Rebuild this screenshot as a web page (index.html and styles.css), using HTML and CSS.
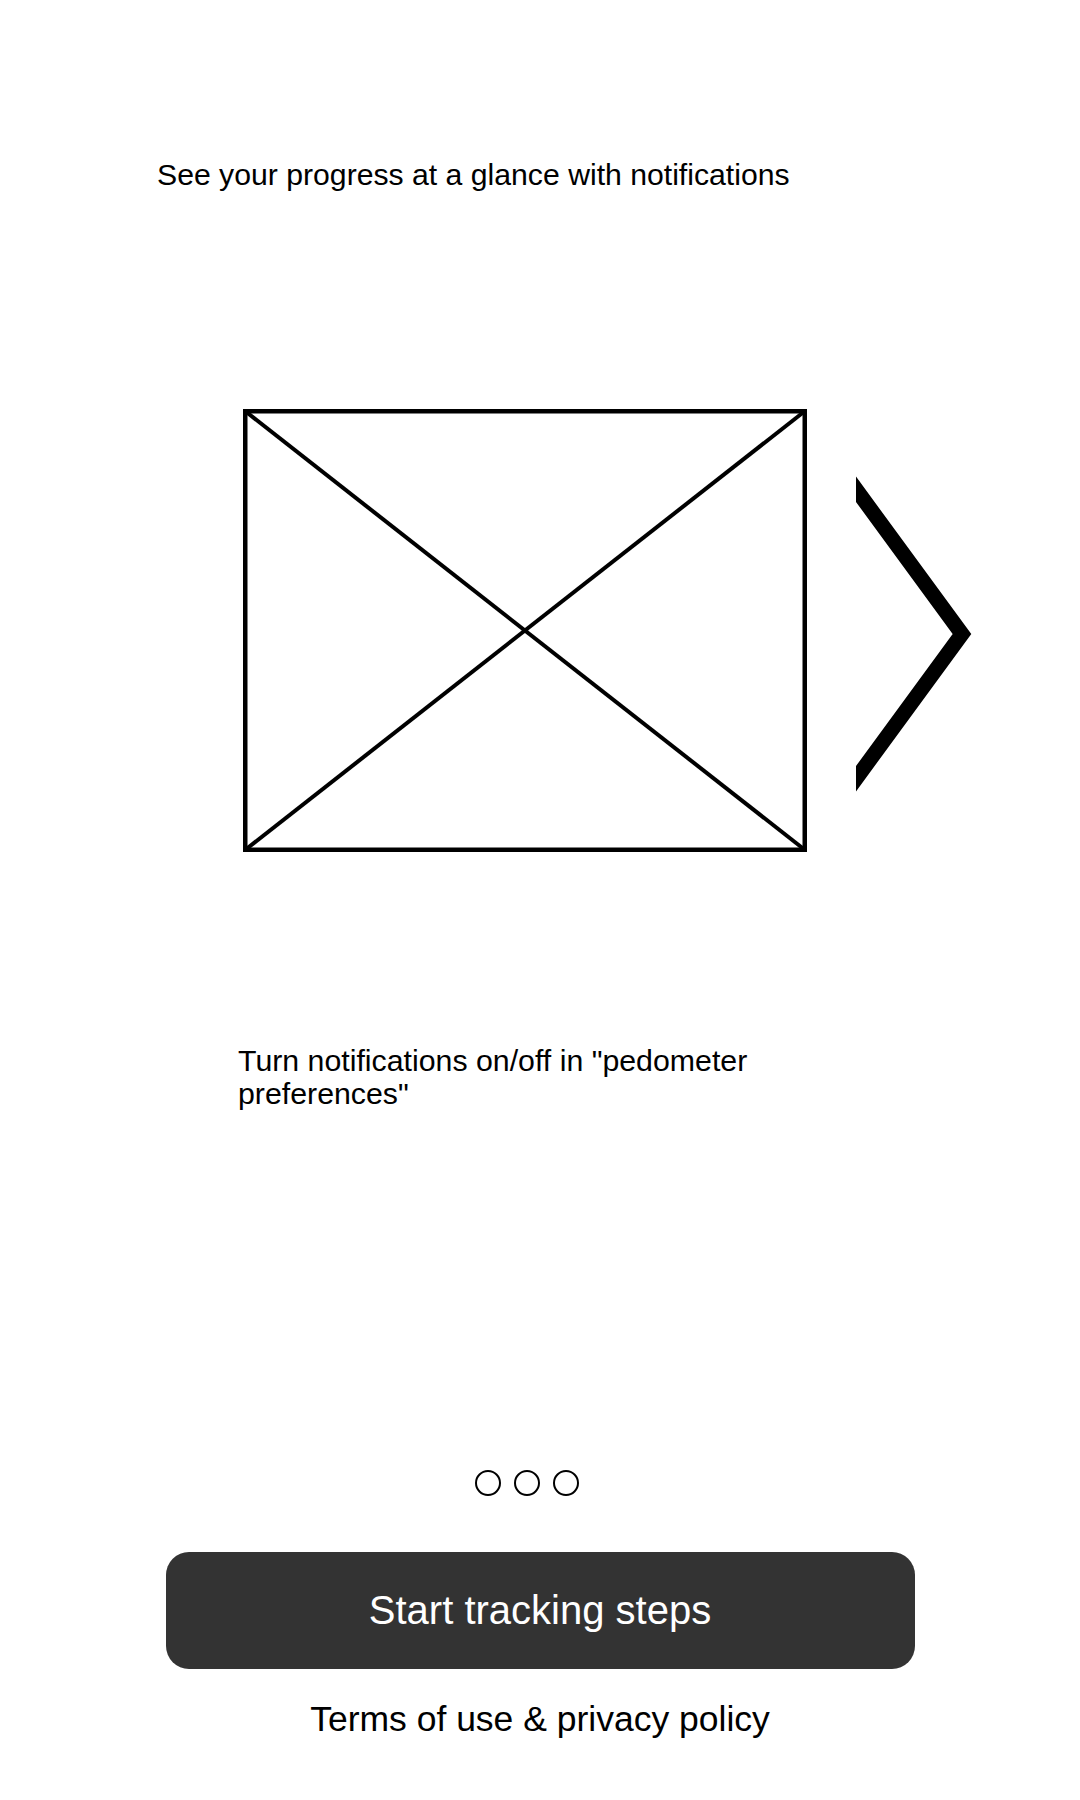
FILE: index.html
```html
<!DOCTYPE html>
<html lang="en">
<head>
<meta charset="utf-8">
<title>Pedometer notifications</title>
<link rel="stylesheet" href="styles.css">
</head>
<body>
<div class="screen">
  <p class="headline">See your progress at a glance with notifications</p>
  <div class="carousel">
    <div class="placeholder">
      <svg width="564" height="443" viewBox="0 0 564 443">
        <rect x="2.25" y="2.25" width="559.5" height="438.5" fill="none" stroke="#000" stroke-width="4.5"/>
        <line x1="2" y1="2" x2="562" y2="441" stroke="#000" stroke-width="4"/>
        <line x1="562" y1="2" x2="2" y2="441" stroke="#000" stroke-width="4"/>
      </svg>
    </div>
    <div class="next">
      <svg width="120" height="340" viewBox="0 0 120 340">
        <polyline points="-20,-8 106,164 -20,336" fill="none" stroke="#000" stroke-width="15" stroke-linejoin="miter" stroke-miterlimit="10"/>
      </svg>
    </div>
  </div>
  <p class="caption">Turn notifications on/off in "pedometer preferences"</p>
  <div class="footer">
    <div class="dots">
      <span class="dot"></span>
      <span class="dot"></span>
      <span class="dot"></span>
    </div>
    <button class="cta">Start tracking steps</button>
    <a class="terms">Terms of use &amp; privacy policy</a>
  </div>
</div>
</body>
</html>
```

FILE: styles.css
```css
html, body {
  margin: 0;
  padding: 0;
  background: #fff;
}

body {
  font-family: "Liberation Sans", Arial, sans-serif;
  color: #000;
}

.screen {
  width: 1080px;
  height: 1800px;
  display: flex;
  flex-direction: column;
  box-sizing: border-box;
}

.headline {
  margin: 158px 0 0 157px;
  font-size: 30.2px;
  line-height: 34px;
}

.carousel {
  display: flex;
  align-items: flex-start;
  margin-top: 217px;
  padding-left: 243px;
}

.placeholder {
  width: 564px;
  height: 443px;
}

.placeholder svg,
.next svg {
  display: block;
}

.next {
  margin-left: 49px;
  margin-top: 61px;
  width: 120px;
  height: 340px;
}

.caption {
  margin: 192px 0 0 238px;
  width: 580px;
  font-size: 30.3px;
  line-height: 33px;
}

.footer {
  margin-top: auto;
  display: flex;
  flex-direction: column;
  align-items: center;
  padding-bottom: 61px;
}

.dots {
  display: flex;
  gap: 13px;
  margin-right: 26px;
}

.dot {
  width: 26px;
  height: 26px;
  border: 2.7px solid #000;
  border-radius: 50%;
  box-sizing: border-box;
}

.cta {
  margin-top: 56px;
  width: 749px;
  height: 117px;
  border: none;
  border-radius: 23px;
  background: #333333;
  color: #fff;
  font-family: "Liberation Sans", Arial, sans-serif;
  font-size: 40px;
  padding: 0;
}

.terms {
  margin-top: 30px;
  font-size: 35.5px;
  line-height: 40px;
  color: #000;
}
```
